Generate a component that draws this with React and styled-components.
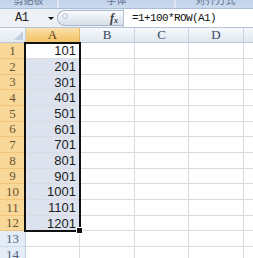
import React from "react";
import styled, { createGlobalStyle } from "styled-components";

const Global = createGlobalStyle`
  html, body { margin: 0; padding: 0; background: #fff; overflow: hidden; }
  body { width: 253px; height: 258px; }
`;

const COLS = ["A", "B", "C", "D", "E"];
const ROW_H = [16, 16, 15, 16, 16, 15, 16, 16, 15, 16, 16, 15, 16, 16];

function App() {
  const rows = ROW_H.map((h, i) => i + 1);
  return (
    <>
      <Global />
      <Window>
        <RibbonStrip>
          <GroupLabel w={57}>
            <LabelText>剪贴板</LabelText>
          </GroupLabel>
          <GroupLabel w={115}>
            <LabelText>字体</LabelText>
          </GroupLabel>
          <GroupLabel w={79}>
            <LabelText>对齐方式</LabelText>
          </GroupLabel>
        </RibbonStrip>
        <FormulaBar>
          <NameBox>
            <NameText>A1</NameText>
            <DropArrow />
          </NameBox>
          <FxPill>
            <Grip />
            <Fx>f<sub>x</sub></Fx>
          </FxPill>
          <FormulaInput>=1+100*ROW(A1)</FormulaInput>
        </FormulaBar>
        <Sheet rows={ROW_H}>
          <Corner>
            <CornerTri />
          </Corner>
          {COLS.map((c, ci) => (
            <ColHead key={c} col={ci + 2} active={c === "A"}>
              {c}
            </ColHead>
          ))}
          {rows.map((r) => (
            <React.Fragment key={r}>
              <RowHead row={r + 1} active={r <= 12}>
                {r}
              </RowHead>
              {COLS.map((c, ci) => (
                <Cell
                  key={c}
                  row={r + 1}
                  col={ci + 2}
                  selected={c === "A" && r > 1 && r <= 12}
                >
                  {c === "A" && r <= 12 ? 1 + 100 * r : ""}
                </Cell>
              ))}
            </React.Fragment>
          ))}
          <Selection>
            <FillHandle />
          </Selection>
        </Sheet>
      </Window>
    </>
  );
}

const Window = styled.div`
  width: 253px;
  height: 258px;
  overflow: hidden;
  display: flex;
  flex-direction: column;
`;

const RibbonStrip = styled.div`
  height: 8px;
  flex: none;
  display: flex;
  gap: 2px;
  background: #dfe8f4;
  border-bottom: 1px solid #aabdd6;
  overflow: hidden;
`;

const GroupLabel = styled.div`
  width: ${(p) => p.w}px;
  flex: none;
  height: 8px;
  overflow: hidden;
  background: linear-gradient(#c2d3ea, #cbdaee);
  display: flex;
  justify-content: center;
`;

const LabelText = styled.span`
  display: block;
  margin-top: -6px;
  font-family: "Noto Sans CJK SC", sans-serif;
  font-size: 10px;
  line-height: 12px;
  color: #5f7390;
`;

const FormulaBar = styled.div`
  height: 18px;
  flex: none;
  display: flex;
  align-items: center;
  background: #edf1f6;
  border-bottom: 1px solid #b6c4d6;
`;

const NameBox = styled.div`
  width: 57px;
  height: 18px;
  flex: none;
  display: flex;
  align-items: center;
  box-sizing: border-box;
  padding-left: 15px;
`;

const NameText = styled.span`
  font-family: "Liberation Mono", monospace;
  font-size: 12px;
  letter-spacing: -0.5px;
  color: #222;
  width: 33px;
`;

const DropArrow = styled.span`
  width: 0;
  height: 0;
  border-left: 3px solid transparent;
  border-right: 3px solid transparent;
  border-top: 3px solid #111;
  margin-top: 1px;
`;

const FxPill = styled.div`
  width: 66px;
  height: 16px;
  flex: none;
  box-sizing: border-box;
  border: 1px solid #a8b8cc;
  border-right: none;
  border-radius: 9px 0 0 9px;
  background: linear-gradient(#fbfcfd, #e6ebf2 55%, #d8dfe8);
  display: flex;
  align-items: center;
  justify-content: space-between;
  padding: 0 5px 0 4px;
`;

const Grip = styled.span`
  width: 4px;
  height: 4px;
  border-radius: 50%;
  border: 1px solid #b9c4d2;
  margin-top: -4px;
`;

const Fx = styled.span`
  font-family: "Liberation Serif", serif;
  font-style: italic;
  font-weight: bold;
  font-size: 12px;
  color: #3a3a3a;
  sub {
    font-size: 8px;
    vertical-align: -1px;
  }
`;

const FormulaInput = styled.div`
  flex: 1;
  height: 18px;
  box-sizing: border-box;
  background: #fff;
  border-left: 1px solid #b6c4d6;
  padding-left: 8px;
  font-family: "Liberation Mono", monospace;
  font-size: 11px;
  letter-spacing: -0.6px;
  line-height: 18px;
  color: #111;
`;

const Sheet = styled.div`
  position: relative;
  display: grid;
  grid-template-columns: 26px 54px 55px 54px 55px 40px;
  grid-template-rows: 15px ${(p) => p.rows.map((h) => h + "px").join(" ")};
  background: #fff;
`;

const Corner = styled.div`
  grid-column: 1;
  grid-row: 1;
  position: relative;
  box-sizing: border-box;
  background: linear-gradient(#f4f7fb, #e3eaf3);
  border-right: 1px solid #c3cfdd;
  border-bottom: 1px solid #b8c7d9;
`;

const CornerTri = styled.span`
  position: absolute;
  right: 2px;
  bottom: 2px;
  width: 0;
  height: 0;
  border-left: 9px solid transparent;
  border-bottom: 9px solid #c2d0e2;
`;

const ColHead = styled.div`
  grid-column: ${(p) => p.col};
  grid-row: 1;
  box-sizing: border-box;
  display: flex;
  align-items: center;
  justify-content: center;
  font-family: "Liberation Serif", serif;
  font-size: 13px;
  color: ${(p) => (p.active ? "#5b4420" : "#34465e")};
  background: ${(p) =>
    p.active
      ? "linear-gradient(#fae1ae, #f6cd7c 60%, #f3c46b)"
      : "linear-gradient(#f7f9fc, #e8eef5 60%, #e1e8f1)"};
  border-right: 1px solid ${(p) => (p.active ? "#e6b45f" : "#c9d4e2")};
  border-bottom: 1px solid ${(p) => (p.active ? "#e0a23c" : "#b8c7d9")};
`;

const RowHead = styled.div`
  grid-column: 1;
  grid-row: ${(p) => p.row};
  box-sizing: border-box;
  display: flex;
  align-items: center;
  justify-content: center;
  font-family: "Liberation Serif", serif;
  font-size: 13px;
  color: ${(p) => (p.active ? "#6b5330" : "#4d6585")};
  background: ${(p) => (p.active ? "#f8d898" : "#e4ecf7")};
  border-right: 1px solid ${(p) => (p.active ? "#e2a548" : "#c3cfdd")};
  border-bottom: 1px solid ${(p) => (p.active ? "#f2c57a" : "#cfdae8")};
`;

const Cell = styled.div`
  grid-column: ${(p) => p.col};
  grid-row: ${(p) => p.row};
  box-sizing: border-box;
  display: flex;
  align-items: center;
  justify-content: flex-end;
  padding-right: 3px;
  font-family: "Liberation Sans", Arial, sans-serif;
  font-size: 13px;
  color: #1c1c1c;
  background: ${(p) => (p.selected ? "#dde3ee" : "#fff")};
  border-right: 1px solid #dadcdf;
  border-bottom: 1px solid #dadcdf;
`;

const Selection = styled.div`
  grid-column: 2;
  grid-row: 2 / 14;
  position: relative;
  margin: -1px -1px -1px -2px;
  border: 2px solid #111;
  pointer-events: none;
`;

const FillHandle = styled.span`
  position: absolute;
  right: -4px;
  bottom: -4px;
  width: 5px;
  height: 5px;
  background: #111;
  border: 1px solid #fff;
`;

export default App;
